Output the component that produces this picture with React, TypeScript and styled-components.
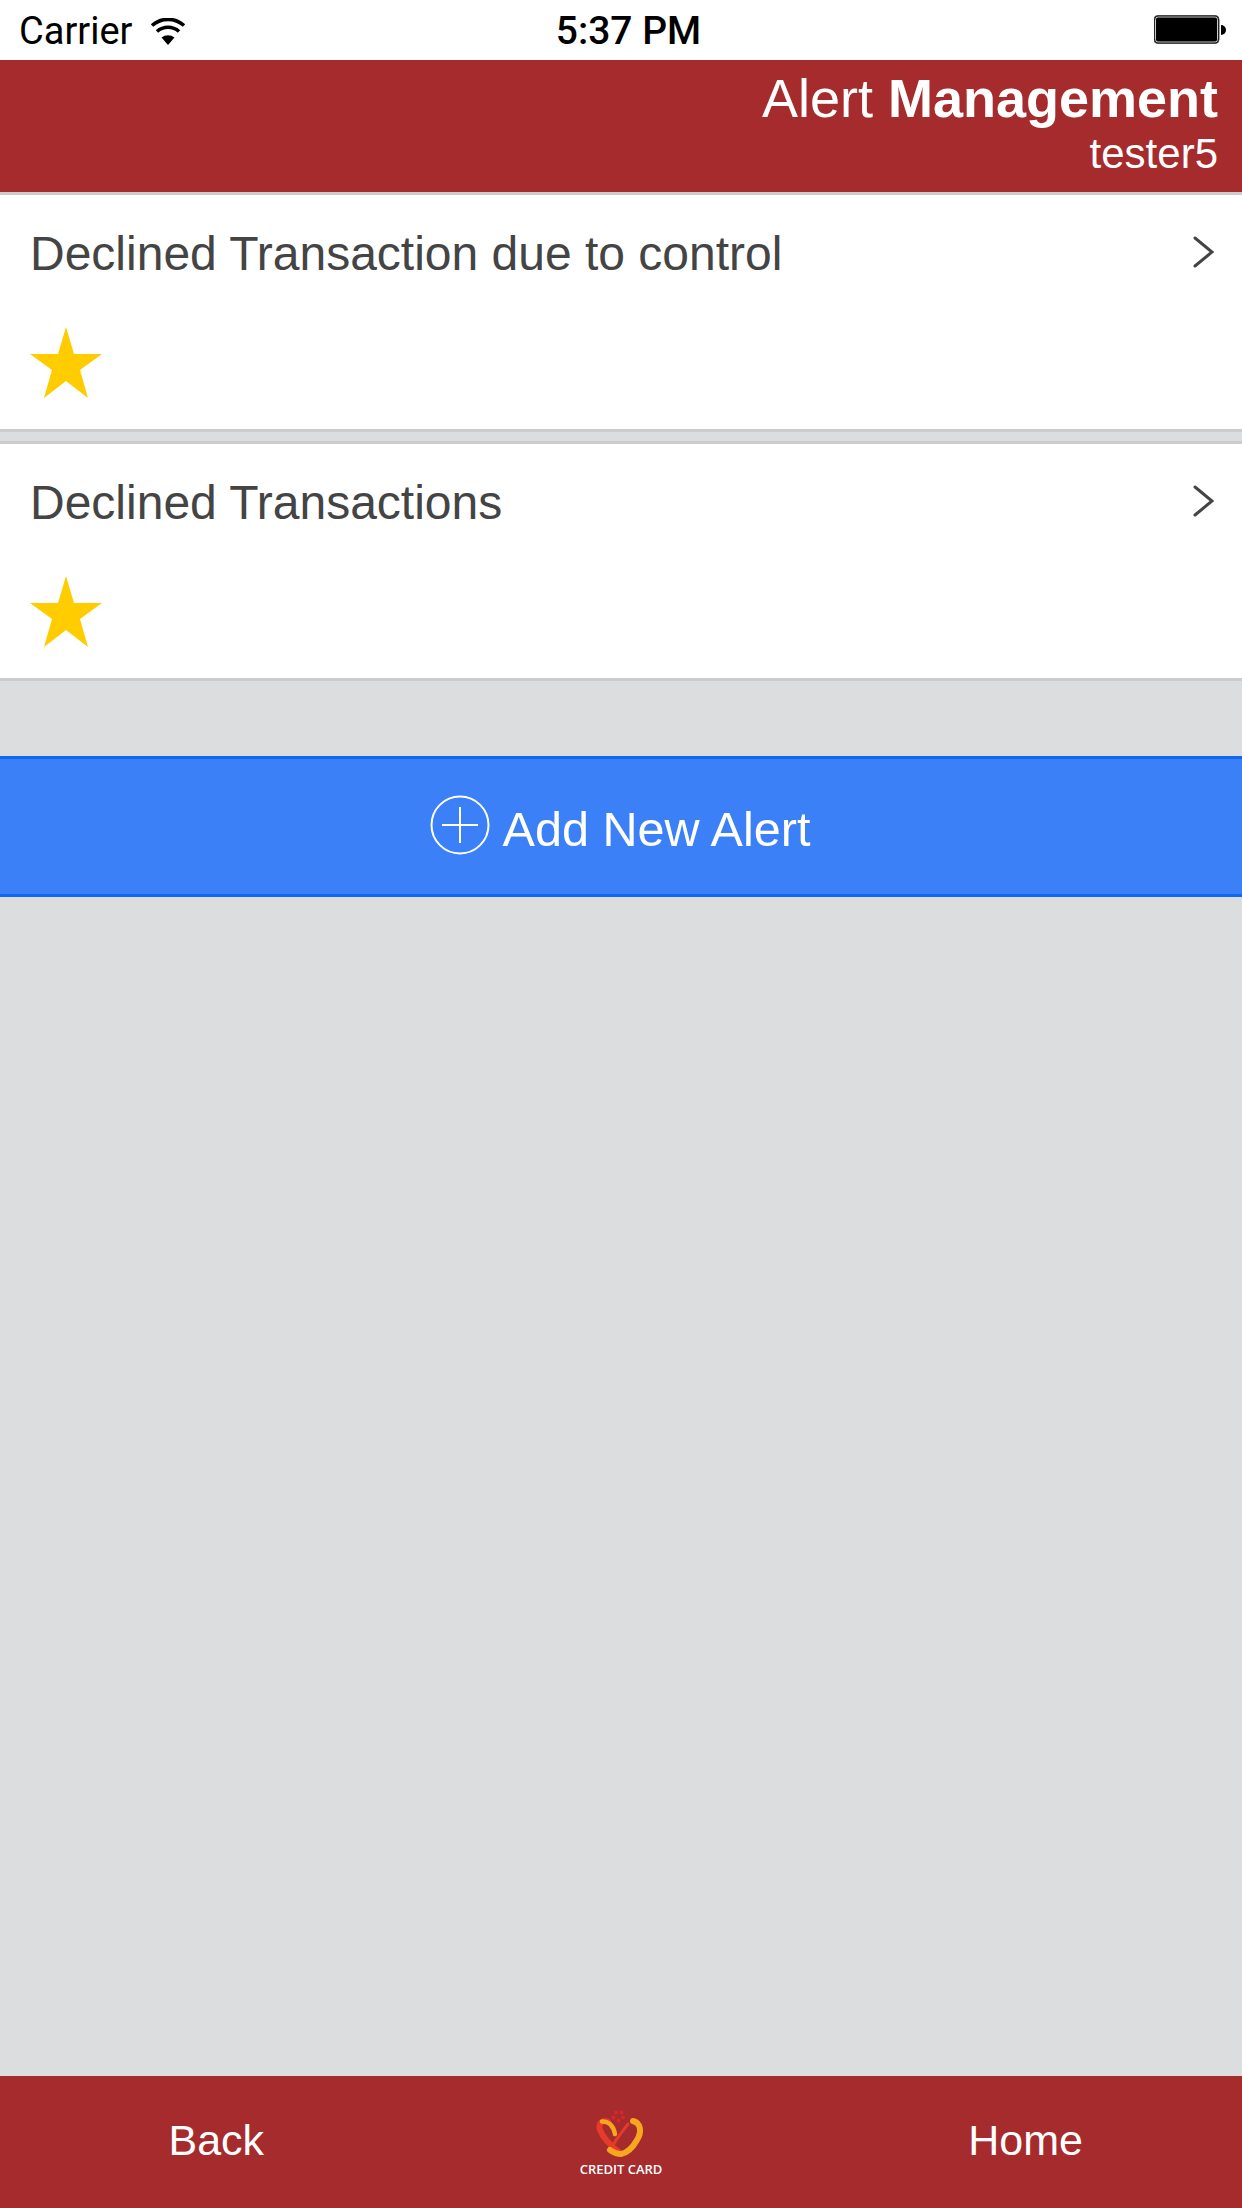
import styled, { createGlobalStyle } from 'styled-components'

const GlobalStyle = createGlobalStyle`
	html, body {
		margin: 0;
		padding: 0;
		background: #dcdddf;
	}
	* {
		box-sizing: border-box;
	}
`

const Page = styled.div`
	width: 1242px;
	height: 2208px;
	display: flex;
	flex-direction: column;
	background: #dcdddf;
	font-family: 'Liberation Sans', Arial, sans-serif;
	overflow: hidden;
`

const StatusBar = styled.div`
	height: 60px;
	flex: none;
	display: grid;
	grid-template-columns: 1fr auto 1fr;
	align-items: center;
	padding: 2px 16px 0 19px;
	background: #ffffff;
	color: #000000;
	font-family: Roboto, sans-serif;
`

const StatusLeft = styled.div`
	display: flex;
	align-items: center;
	gap: 18px;
	font-size: 38px;
`

const StatusTime = styled.div`
	font-size: 39px;
	font-weight: 500;
	margin-left: 12px;
`

const StatusRight = styled.div`
	display: flex;
	justify-content: flex-end;
	margin-top: -2px;
`

const Header = styled.header`
	height: 135px;
	flex: none;
	display: flex;
	flex-direction: column;
	align-items: flex-end;
	padding: 7px 24px 0 0;
	background: #a62b2c;
	border-bottom: 3px solid #cccccc;
	color: #ffffff;
`

const Title = styled.div`
	font-size: 54px;
	line-height: 62px;
`

const Subtitle = styled.div`
	font-size: 42px;
	line-height: 48px;
	margin-top: 1px;
`

const AlertList = styled.div`
	display: flex;
	flex-direction: column;
	gap: 9px;
`

const AlertCard = styled.div`
	height: 237px;
	padding: 30px 28px 0 30px;
	background: #ffffff;
	border-bottom: 3px solid #cccccc;

	& + & {
		height: 240px;
		border-top: 3px solid #cccccc;
	}
`

const AlertTop = styled.div`
	display: flex;
	align-items: center;
	justify-content: space-between;
	height: 54px;
`

const AlertName = styled.div`
	font-size: 48px;
	color: #444444;
	padding-top: 2px;
`

const StarIcon = styled.svg`
	display: block;
	width: 72px;
	height: 72px;
	margin-top: 48px;
	fill: #ffcc00;
`

const AddButton = styled.button`
	height: 141px;
	flex: none;
	margin-top: 75px;
	display: flex;
	align-items: center;
	justify-content: center;
	gap: 13px;
	padding: 0 2px 0 0;
	background: #3b80f7;
	border: none;
	border-top: 3px solid #0f67f2;
	border-bottom: 3px solid #0f67f2;
	color: #ffffff;
	font-family: inherit;
	font-size: 48.6px;
`

const AddLabel = styled.span`
	padding-top: 4px;
`

const PlusIcon = styled.svg`
	display: block;
	width: 60px;
	height: 60px;
	margin-top: -4px;
`

const Footer = styled.footer`
	height: 132px;
	flex: none;
	margin-top: auto;
	display: grid;
	grid-template-columns: repeat(3, 1fr);
	align-items: center;
	justify-items: center;
	padding: 0 14px 3px;
	background: #a62b2c;
	color: #ffffff;
	font-size: 43px;
`

const LogoBox = styled.div`
	display: flex;
	flex-direction: column;
	align-items: center;
	margin-top: 3px;
`

const LogoText = styled.div`
	font-family: 'Open Sans', sans-serif;
	font-size: 13px;
	font-weight: 600;
	line-height: 16px;
	margin-top: 4px;
`

const WifiIcon = () => (
	<svg width="36" height="27" viewBox="0 0 36 27">
		<path d="M18 27 L11.5 19.6 A10 10 0 0 1 24.5 19.6 Z" fill="#000" />
		<path d="M7 13.5 A16.5 16.5 0 0 1 29 13.5" fill="none" stroke="#000" strokeWidth="3.6" />
		<path d="M2 7.5 A24 24 0 0 1 34 7.5" fill="none" stroke="#000" strokeWidth="3.6" />
	</svg>
)

const BatteryIcon = () => (
	<svg width="72" height="30" viewBox="0 0 72 30">
		<rect x="0" y="0.5" width="65" height="28" rx="4" fill="#000" stroke="#444" />
		<rect x="1.5" y="2" width="62" height="25" rx="2.5" fill="#000" stroke="#fff" strokeWidth="0.8" />
		<path d="M67 10 A5 5 0 0 1 67 20 Z" fill="#000" />
	</svg>
)

const Chevron = () => (
	<svg width="21" height="34" viewBox="0 0 21 34">
		<path d="M2 3 L19 17 L2 31" fill="none" stroke="#444" strokeWidth="3" strokeLinecap="round" />
	</svg>
)

const PlusCircle = () => (
	<PlusIcon viewBox="0 0 60 60">
		<circle cx="30" cy="30" r="28.5" fill="none" stroke="#fff" strokeWidth="2" />
		<path d="M30 12 V48 M12 30 H48" fill="none" stroke="#fff" strokeWidth="2" />
	</PlusIcon>
)

const HeartLogo = () => (
	<svg width="50" height="50" viewBox="0 0 50 50">
		<g fill="#d8262c">
			<circle cx="20" cy="5.5" r="2" />
			<circle cx="25.5" cy="5.5" r="2" />
			<circle cx="17.5" cy="10.5" r="2" />
			<circle cx="27" cy="10.5" r="2" />
			<circle cx="22.5" cy="13.5" r="2" />
		</g>
		<g fill="none" strokeLinecap="round">
			<path d="M12 15 C6 12 2 17 4 23 C7 31 15 39 24 46" stroke="#e63a2a" strokeWidth="6" />
			<path d="M6 14.5 C11 14 17 17 19 27" stroke="#f6a61f" strokeWidth="4.5" />
			<path d="M32 17 C26 25 20 32 16 40" stroke="#e63a2a" strokeWidth="3" />
			<path d="M37 14 C45 16 46 25 41 33 C37 40 31 46 25 47 C21 47 17 45 14 43" stroke="#f6a61f" strokeWidth="6" />
		</g>
	</svg>
)

const alerts = ['Declined Transaction due to control', 'Declined Transactions']

const App = () => {
	return (
		<Page>
			<GlobalStyle />
			<StatusBar>
				<StatusLeft>
					Carrier
					<WifiIcon />
				</StatusLeft>
				<StatusTime>5:37 PM</StatusTime>
				<StatusRight>
					<BatteryIcon />
				</StatusRight>
			</StatusBar>
			<Header>
				<Title>
					Alert <b>Management</b>
				</Title>
				<Subtitle>tester5</Subtitle>
			</Header>
			<AlertList>
				{alerts.map(name => (
					<AlertCard key={name}>
						<AlertTop>
							<AlertName>{name}</AlertName>
							<Chevron />
						</AlertTop>
						<StarIcon viewBox="0 0 72 72">
							<polygon points="36,0 44,27 72,27 50,43 58,71 36,54 14,71 22,43 0,27 28,27" />
						</StarIcon>
					</AlertCard>
				))}
			</AlertList>
			<AddButton>
				<PlusCircle />
				<AddLabel>Add New Alert</AddLabel>
			</AddButton>
			<Footer>
				<span>Back</span>
				<LogoBox>
					<HeartLogo />
					<LogoText>CREDIT CARD</LogoText>
				</LogoBox>
				<span>Home</span>
			</Footer>
		</Page>
	)
}

export default App
